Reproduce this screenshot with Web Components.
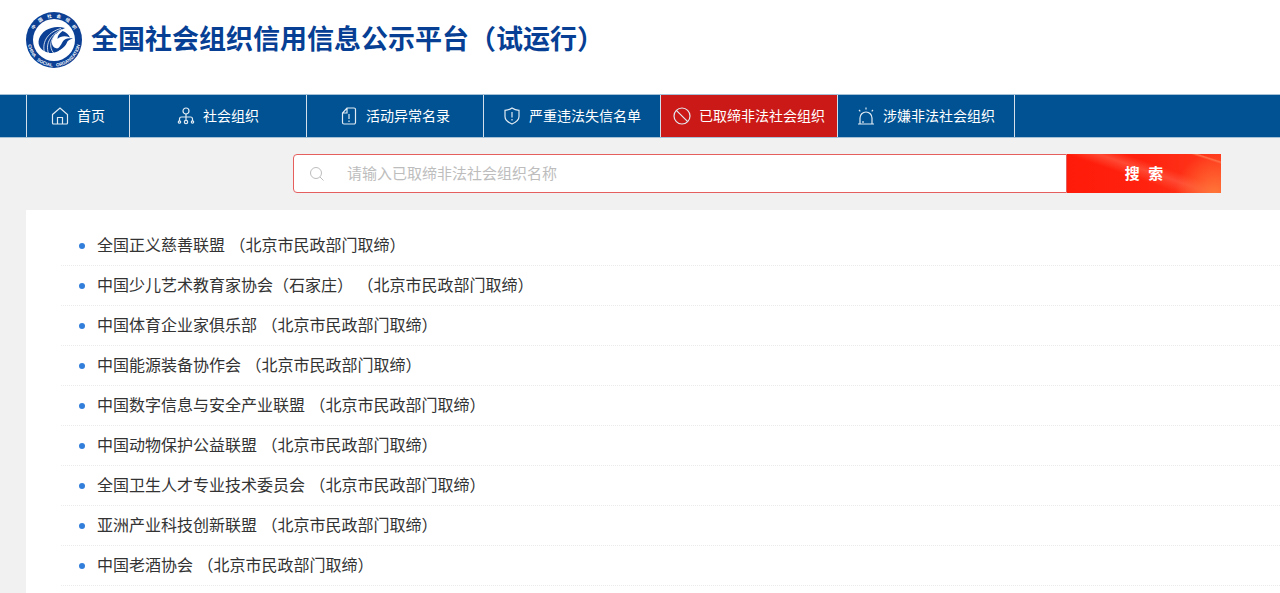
<!DOCTYPE html>
<html lang="zh-CN">
<head>
<meta charset="utf-8">
<meta name="viewport" content="width=device-width, initial-scale=1">
<title>全国社会组织信用信息公示平台</title>
<style>
  body {
    margin: 0;
    background: #f1f1f1;
    font-family: "Liberation Sans", "Noto Sans CJK SC", sans-serif;
  }
</style>
</head>
<body>
<credit-app></credit-app>

<script>
class SiteLogo extends HTMLElement {
  constructor() {
    super();
    this.attachShadow({ mode: "open" });
  }

  connectedCallback() {
    this.shadowRoot.innerHTML = `
      <style>
        :host { display: block; width: 56px; height: 56px; }
        svg { display: block; }
        text { fill: #fff; font-family: "Liberation Sans", "Noto Sans CJK SC", sans-serif; font-weight: bold; }
      </style>
      <svg width="56" height="56" viewBox="0 0 56 56" aria-hidden="true">
        <defs>
          <path id="top" d="M5.4 28 A22.6 22.6 0 0 1 50.6 28"/>
          <path id="bottom" d="M2.1 23 A26.4 26.4 0 1 0 53.9 23"/>
        </defs>
        <circle cx="28" cy="28" r="28" fill="#0b4094"/>
        <circle cx="28" cy="28" r="21" fill="#fff"/>
        <text font-size="4.5"><textPath href="#top" startOffset="50%" text-anchor="middle">中　国　社　会　组　织</textPath></text>
        <text font-size="4.5"><textPath href="#bottom" startOffset="50%" text-anchor="middle">CHINA&nbsp;&nbsp; SOCIAL&nbsp;&nbsp; ORGANIZATION</textPath></text>
        <g fill="#0b4094">
          <path d="M39 16 C27 12.5 16 18 13 27 C11 34 15.5 39.5 24 41 C29 41 33.5 39 36 36 C31 37.500 27 36 26 32 C25 27 29 20.500 39 16Z"/>
          <path d="M36.500 19 C33 21.500 31.500 24 31.500 27 C34.500 23.800 39.500 23.500 44 25.500 C42.500 22.500 40 20 36.500 19Z"/>
          <path d="M47 26.500 C41.500 25.500 38 27 36.500 30 C35 33.500 32.500 36.500 28 39.500 C34.500 38.500 39 35 40.500 31.500 C41.500 28.500 43.500 27.300 47 26.500Z"/>
        </g>
        <g fill="none" stroke="#fff" stroke-width=".8">
          <path d="M35 16.500 C23 19.500 15.500 29 18.500 40.500"/>
          <path d="M36 17.500 C25 22 19 31 22.500 41.500"/>
          <path d="M30 22 C24 28 23 35 27.500 41"/>
        </g>
      </svg>
    `;
  }
}

class SiteHeader extends HTMLElement {
  constructor() {
    super();
    this.attachShadow({ mode: "open" });
  }

  connectedCallback() {
    this.shadowRoot.innerHTML = `
      <style>
        :host { display: block; background: #fff; }
        header {
          display: flex;
          align-items: center;
          gap: 9px;
          padding: 12px 26px 26px;
        }
        h1 {
          margin: 0;
          color: #063f94;
          font-size: 27px;
          line-height: 56px;
          font-weight: bold;
          white-space: nowrap;
        }
      </style>
      <header>
        <site-logo></site-logo>
        <h1><slot></slot></h1>
      </header>
    `;
  }
}

const icons = {
  home: `<path d="M1.5 7.5 9 1l7.5 6.5V16a1 1 0 0 1-1 1h-13a1 1 0 0 1-1-1z"/><path d="M6.5 17v-6.5h5V17"/>`,
  group: `<circle cx="9" cy="4" r="3"/><path d="M9 7v6M2.5 14v-2q0-2 2-2h9q2 0 2 2v2"/><circle cx="2.5" cy="15" r="1.2"/><circle cx="9" cy="15" r="1.7"/><circle cx="15.5" cy="15" r="1.2"/>`,
  file: `<path d="M7 1h7a1.5 1.5 0 0 1 1.5 1.5v13A1.5 1.5 0 0 1 14 17H4a1.5 1.5 0 0 1-1.5-1.5V6zM7 1v5H2.5"/><path d="M9 7v5M9 13.5v1.5"/>`,
  shield: `<path d="M9 1q3 2 7 2.3v6.2q0 4.5-7 7.5-7-3-7-7.500V3.300Q6 3 9 1z"/><path d="M9 5v5.5M9 12v1.5"/>`,
  ban: `<circle cx="9" cy="9" r="8"/><path d="M3.3 3.3l11.4 11.4"/>`,
  alarm: `<path d="M3 17v-6a6 6 0 0 1 12 0v6M1 17h16M9 .5v2M2 3l1.3 1.3M16 3l-1.3 1.3M6 16v-2"/>`,
};

class NavTab extends HTMLElement {
  constructor() {
    super();
    this.attachShadow({ mode: "open" });
  }

  connectedCallback() {
    const current = this.hasAttribute("active") ? 'aria-current="page"' : "";

    this.shadowRoot.innerHTML = `
      <style>
        :host {
          display: block;
          box-sizing: border-box;
          width: 177px;
          border-right: 1px solid #d3e0eb;
        }
        :host([icon="home"]) {
          width: 104px;
          border-left: 1px solid #d3e0eb;
        }
        :host([active]) { background: #cb1917; }
        a {
          display: flex;
          align-items: center;
          justify-content: center;
          gap: 8px;
          height: 42px;
          color: #fff;
          font-size: 14px;
          line-height: 20px;
          text-decoration: none;
          white-space: nowrap;
        }
        svg { fill: none; stroke: #e2ebf3; stroke-width: 1.2; }
      </style>
      <a href="#" ${current}>
        <svg width="18" height="18" viewBox="0 0 18 18" aria-hidden="true">${icons[this.getAttribute("icon")]}</svg>
        <slot></slot>
      </a>
    `;
  }
}

class NavBar extends HTMLElement {
  constructor() {
    super();
    this.attachShadow({ mode: "open" });
  }

  connectedCallback() {
    this.shadowRoot.innerHTML = `
      <style>
        :host {
          display: block;
          background: #005293;
          border-top: 1px solid #a5c1d8;
          border-bottom: 1px solid #a5c1d8;
        }
        nav { display: flex; padding-left: 26px; }
      </style>
      <nav><slot></slot></nav>
    `;
  }
}

class SearchBar extends HTMLElement {
  constructor() {
    super();
    this.attachShadow({ mode: "open" });
  }

  connectedCallback() {
    const hint = this.getAttribute("placeholder");

    this.shadowRoot.innerHTML = `
      <style>
        :host { display: block; padding: 16px 59px 17px 293px; }
        form { display: flex; height: 39px; }
        label {
          flex: 1;
          display: flex;
          align-items: center;
          gap: 22px;
          padding-left: 15px;
          background: #fff;
          border: 1px solid #e55f5f;
          border-radius: 4px 0 0 4px;
        }
        svg { flex: none; fill: none; stroke: #bdbdbd; }
        input {
          flex: 1;
          min-width: 0;
          padding: 0;
          border: 0;
          outline: none;
          background: none;
          color: #333;
          font: 15px/24px "Liberation Sans", "Noto Sans CJK SC", sans-serif;
        }
        input::placeholder { color: #bdbdbd; }
        button {
          width: 154px;
          padding: 0;
          border: 0;
          color: #fff;
          font: bold 15px/24px "Liberation Sans", "Noto Sans CJK SC", sans-serif;
          cursor: pointer;
          background:
            linear-gradient(198deg, transparent 20%, #ff7048 24%, transparent 30%) 100% 0 / 30% 50% no-repeat,
            radial-gradient(circle at 96% 100%, #ff7538 0, transparent 40px),
            linear-gradient(199deg, transparent 36%, #ff4a34 46%, transparent 58%),
            linear-gradient(90deg, #ff1b09, #ff220e 50%, #ff3a1d);
        }
      </style>
      <form role="search">
        <label>
          <svg width="16" height="16" viewBox="0 0 16 16" aria-hidden="true">
            <circle cx="7" cy="7" r="5.5"/><path d="M11 11l3.5 3.5"/>
          </svg>
          <input type="text" aria-label="${hint}" placeholder="${hint}">
        </label>
        <button type="submit">搜&nbsp;&nbsp;索</button>
      </form>
    `;

    this.shadowRoot.querySelector("form").onsubmit = (e) => e.preventDefault();
  }
}

class OrgItem extends HTMLElement {
  constructor() {
    super();
    this.attachShadow({ mode: "open" });
  }

  connectedCallback() {
    this.shadowRoot.innerHTML = `
      <style>
        :host {
          display: flex;
          align-items: center;
          gap: 12px;
          height: 39px;
          padding-left: 18px;
          border-bottom: 1px dotted #ebebeb;
        }
        :host::before {
          content: "";
          width: 6px;
          height: 6px;
          border-radius: 50%;
          background: #327edb;
        }
        a {
          color: #333;
          font-size: 16px;
          line-height: 24px;
          text-decoration: none;
        }
      </style>
      <a href="#"><slot></slot></a>
    `;
  }
}

class OrgList extends HTMLElement {
  constructor() {
    super();
    this.attachShadow({ mode: "open" });
  }

  connectedCallback() {
    this.shadowRoot.innerHTML = `
      <style>
        :host {
          display: block;
          flex: 1;
          margin-left: 26px;
          padding: 16px 0 0 35px;
          background: #fff;
        }
      </style>
      <div role="list"><slot></slot></div>
    `;
  }
}

class CreditApp extends HTMLElement {
  constructor() {
    super();
    this.attachShadow({ mode: "open" });
  }

  connectedCallback() {
    const tabs = [
      ["home", "首页"],
      ["group", "社会组织"],
      ["file", "活动异常名录"],
      ["shield", "严重违法失信名单"],
      ["ban", "已取缔非法社会组织"],
      ["alarm", "涉嫌非法社会组织"],
    ];
    const orgs = [
      "全国正义慈善联盟",
      "中国少儿艺术教育家协会（石家庄）",
      "中国体育企业家俱乐部",
      "中国能源装备协作会",
      "中国数字信息与安全产业联盟",
      "中国动物保护公益联盟",
      "全国卫生人才专业技术委员会",
      "亚洲产业科技创新联盟",
      "中国老酒协会",
    ];

    this.shadowRoot.innerHTML = `
      <style>
        :host { display: flex; flex-direction: column; min-height: 100vh; }
      </style>
      <site-header>全国社会组织信用信息公示平台（试运行）</site-header>
      <nav-bar>
        ${tabs.map(([icon, name]) => `<nav-tab icon="${icon}" ${icon === "ban" ? "active" : ""}>${name}</nav-tab>`).join("")}
      </nav-bar>
      <search-bar placeholder="请输入已取缔非法社会组织名称"></search-bar>
      <org-list>
        ${orgs.map((name) => `<org-item role="listitem">${name} （北京市民政部门取缔）</org-item>`).join("")}
      </org-list>
    `;
  }
}

customElements.define("site-logo", SiteLogo);
customElements.define("site-header", SiteHeader);
customElements.define("nav-tab", NavTab);
customElements.define("nav-bar", NavBar);
customElements.define("search-bar", SearchBar);
customElements.define("org-item", OrgItem);
customElements.define("org-list", OrgList);
customElements.define("credit-app", CreditApp);
</script>
</body>
</html>
